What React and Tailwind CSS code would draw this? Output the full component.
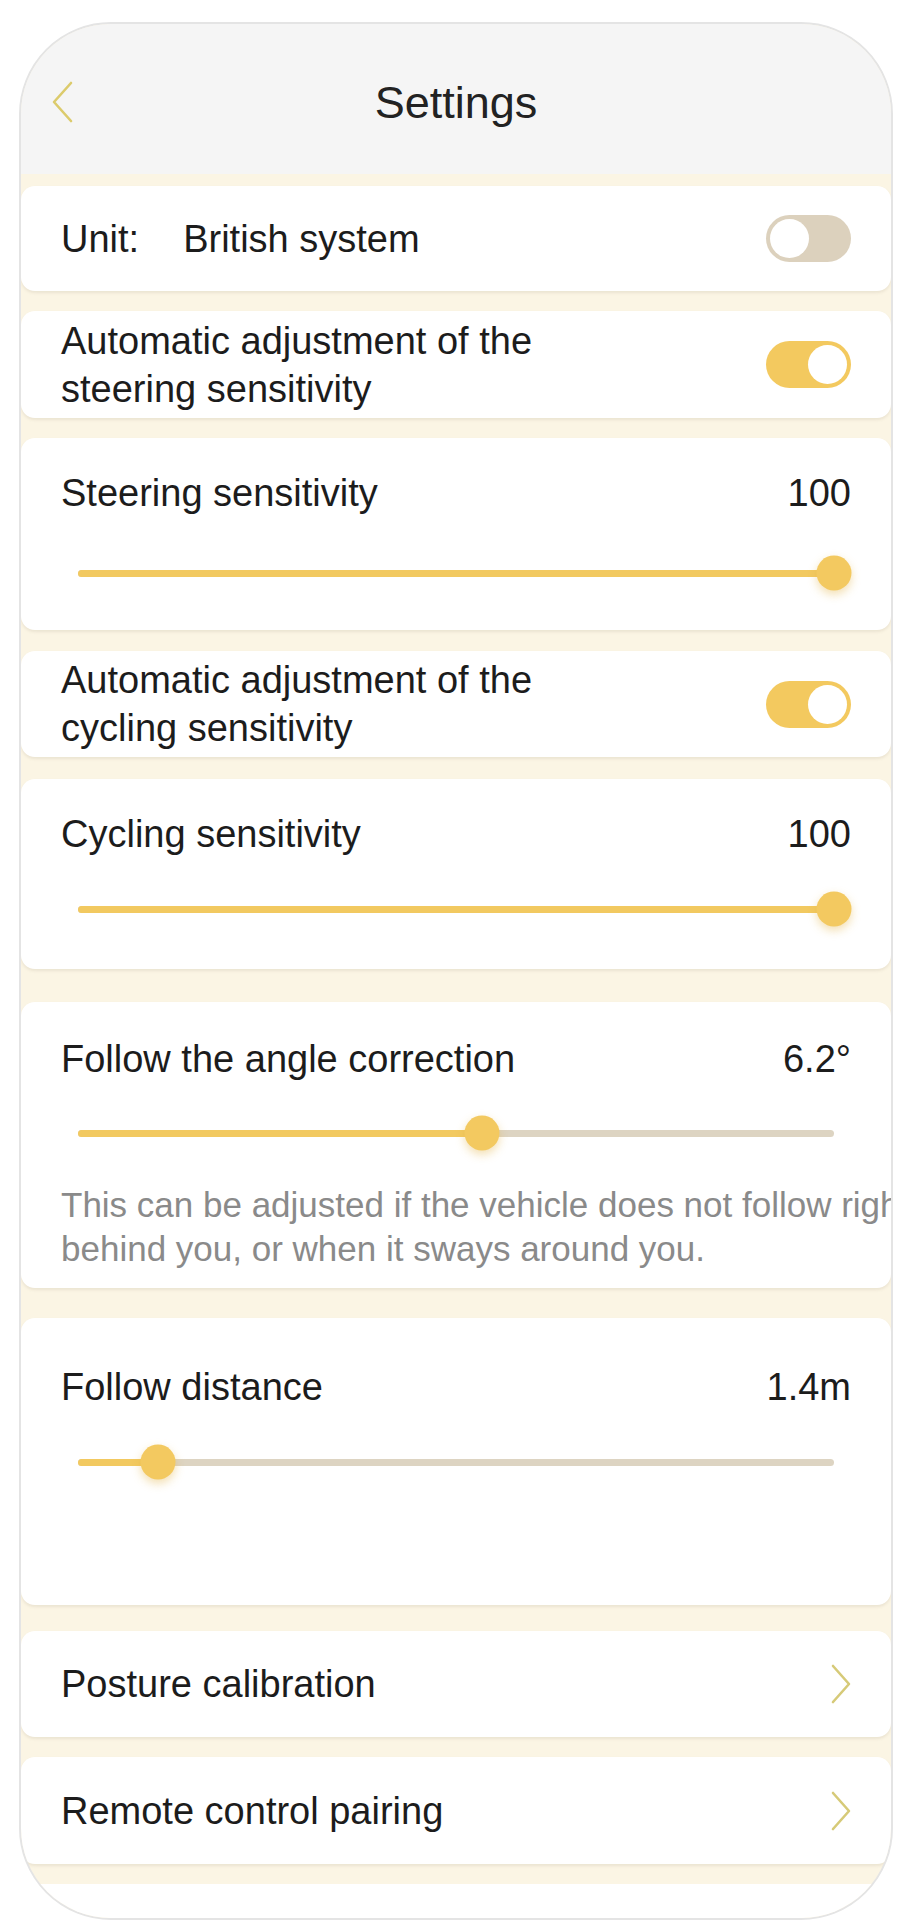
import React from 'react';

const font = { fontFamily: '"Liberation Sans", Arial, sans-serif' };

function Toggle({ on }) {
    return (
        <div className={`w-[85px] h-[47px] rounded-full p-[4px] flex shrink-0 ${on ? 'bg-[#f3c95f] justify-end' : 'bg-[#dcd1bd] justify-start'}`}>
            <div className="w-[39px] h-[39px] rounded-full bg-white" />
        </div>
    );
}

function Slider({ value }) {
    return (
        <div className="px-[17px] h-[36px] flex items-center">
            <div className="relative w-full h-[7px] rounded-full bg-[#ddd4c2]">
                <div className="h-full rounded-full bg-[#f2c960]" style={{ width: `${value * 100}%` }} />
                <div
                    className="absolute top-1/2 w-[35px] h-[35px] -translate-x-1/2 -translate-y-1/2 rounded-full bg-[#f3c960] shadow-[0_4px_10px_rgba(226,176,60,0.4)]"
                    style={{ left: `${value * 100}%` }}
                />
            </div>
        </div>
    );
}

function Chevron({ dir }) {
    return dir === 'left' ? (
        <svg width="22" height="42" viewBox="0 0 22 42" fill="none">
            <polyline points="20,2 3,21 20,40" stroke="#dccb6c" strokeWidth="2.6" strokeLinecap="round" strokeLinejoin="round" />
        </svg>
    ) : (
        <svg width="20" height="40" viewBox="0 0 20 40" fill="none">
            <polyline points="2,2 18,20 2,38" stroke="#d6ca78" strokeWidth="2.6" strokeLinecap="round" strokeLinejoin="round" />
        </svg>
    );
}

const card = "bg-white rounded-[14px] shadow-[0_2px_3px_rgba(120,110,80,0.12)] px-[40px] overflow-hidden";

export default function App() {
    return (
        <div className="min-h-screen bg-white pt-[22px] pl-[19px] text-[#1c1c1c]" style={font}>
            <div className="w-[874px] h-[1898px] rounded-[92px] border-2 border-[#e4e4e4] overflow-hidden bg-[#fbf5e4] flex flex-col">

                {/* Header */}
                <div className="h-[150px] shrink-0 bg-[#f5f5f5] grid grid-cols-[1fr_auto_1fr] items-start pt-[57px]">
                    <div className="pl-[30px]"><Chevron dir="left" /></div>
                    <h1 className="text-[45px] leading-[44px] text-[#222]">Settings</h1>
                    <div />
                </div>

                {/* Unit */}
                <div className={`${card} mt-[12px] h-[105px] flex items-center justify-between`}>
                    <div className="text-[38px] leading-[44px]">
                        <span>Unit:</span>
                        <span className="ml-[44px]">British system</span>
                    </div>
                    <Toggle on={false} />
                </div>

                {/* Auto steering */}
                <div className={`${card} mt-[20px] h-[107px] flex items-center justify-between`}>
                    <div className="text-[38px] leading-[48px]">
                        Automatic adjustment of the<br />steering sensitivity
                    </div>
                    <Toggle on />
                </div>

                {/* Steering sensitivity */}
                <div className={`${card} mt-[20px] h-[192px] pt-[33px]`}>
                    <div className="flex justify-between text-[38px] leading-[44px]">
                        <span>Steering sensitivity</span>
                        <span>100</span>
                    </div>
                    <div className="mt-[40px]"><Slider value={1} /></div>
                </div>

                {/* Auto cycling */}
                <div className={`${card} mt-[21px] h-[106px] flex items-center justify-between`}>
                    <div className="text-[38px] leading-[48px]">
                        Automatic adjustment of the<br />cycling sensitivity
                    </div>
                    <Toggle on />
                </div>

                {/* Cycling sensitivity */}
                <div className={`${card} mt-[22px] h-[190px] pt-[33px]`}>
                    <div className="flex justify-between text-[38px] leading-[44px]">
                        <span>Cycling sensitivity</span>
                        <span>100</span>
                    </div>
                    <div className="mt-[35px]"><Slider value={1} /></div>
                </div>

                {/* Angle correction */}
                <div className={`${card} mt-[33px] h-[286px] pt-[35px] pr-0`}>
                    <div className="flex justify-between text-[38px] leading-[44px] pr-[40px]">
                        <span>Follow the angle correction</span>
                        <span>6.2°</span>
                    </div>
                    <div className="mt-[34px] pr-[40px]"><Slider value={0.535} /></div>
                    <div className="mt-[32px] text-[35px] leading-[44px] text-[#8a8a8a] whitespace-nowrap">
                        <div>This can be adjusted if the vehicle does not follow right</div>
                        <div>behind you, or when it sways around you.</div>
                    </div>
                </div>

                {/* Follow distance */}
                <div className={`${card} mt-[30px] h-[287px] pt-[47px]`}>
                    <div className="flex justify-between text-[38px] leading-[44px]">
                        <span>Follow distance</span>
                        <span>1.4m</span>
                    </div>
                    <div className="mt-[35px]"><Slider value={0.106} /></div>
                </div>

                {/* Posture calibration */}
                <div className={`${card} mt-[26px] h-[106px] shrink-0 flex items-center justify-between`}>
                    <span className="text-[38px] leading-[44px]">Posture calibration</span>
                    <Chevron dir="right" />
                </div>

                {/* Remote control pairing */}
                <div className={`${card} mt-[20px] h-[107px] shrink-0 flex items-center justify-between`}>
                    <span className="text-[38px] leading-[44px]">Remote control pairing</span>
                    <Chevron dir="right" />
                </div>

                <div className="mt-[20px] flex-1 bg-white rounded-t-[14px]" />
            </div>
        </div>
    );
}
